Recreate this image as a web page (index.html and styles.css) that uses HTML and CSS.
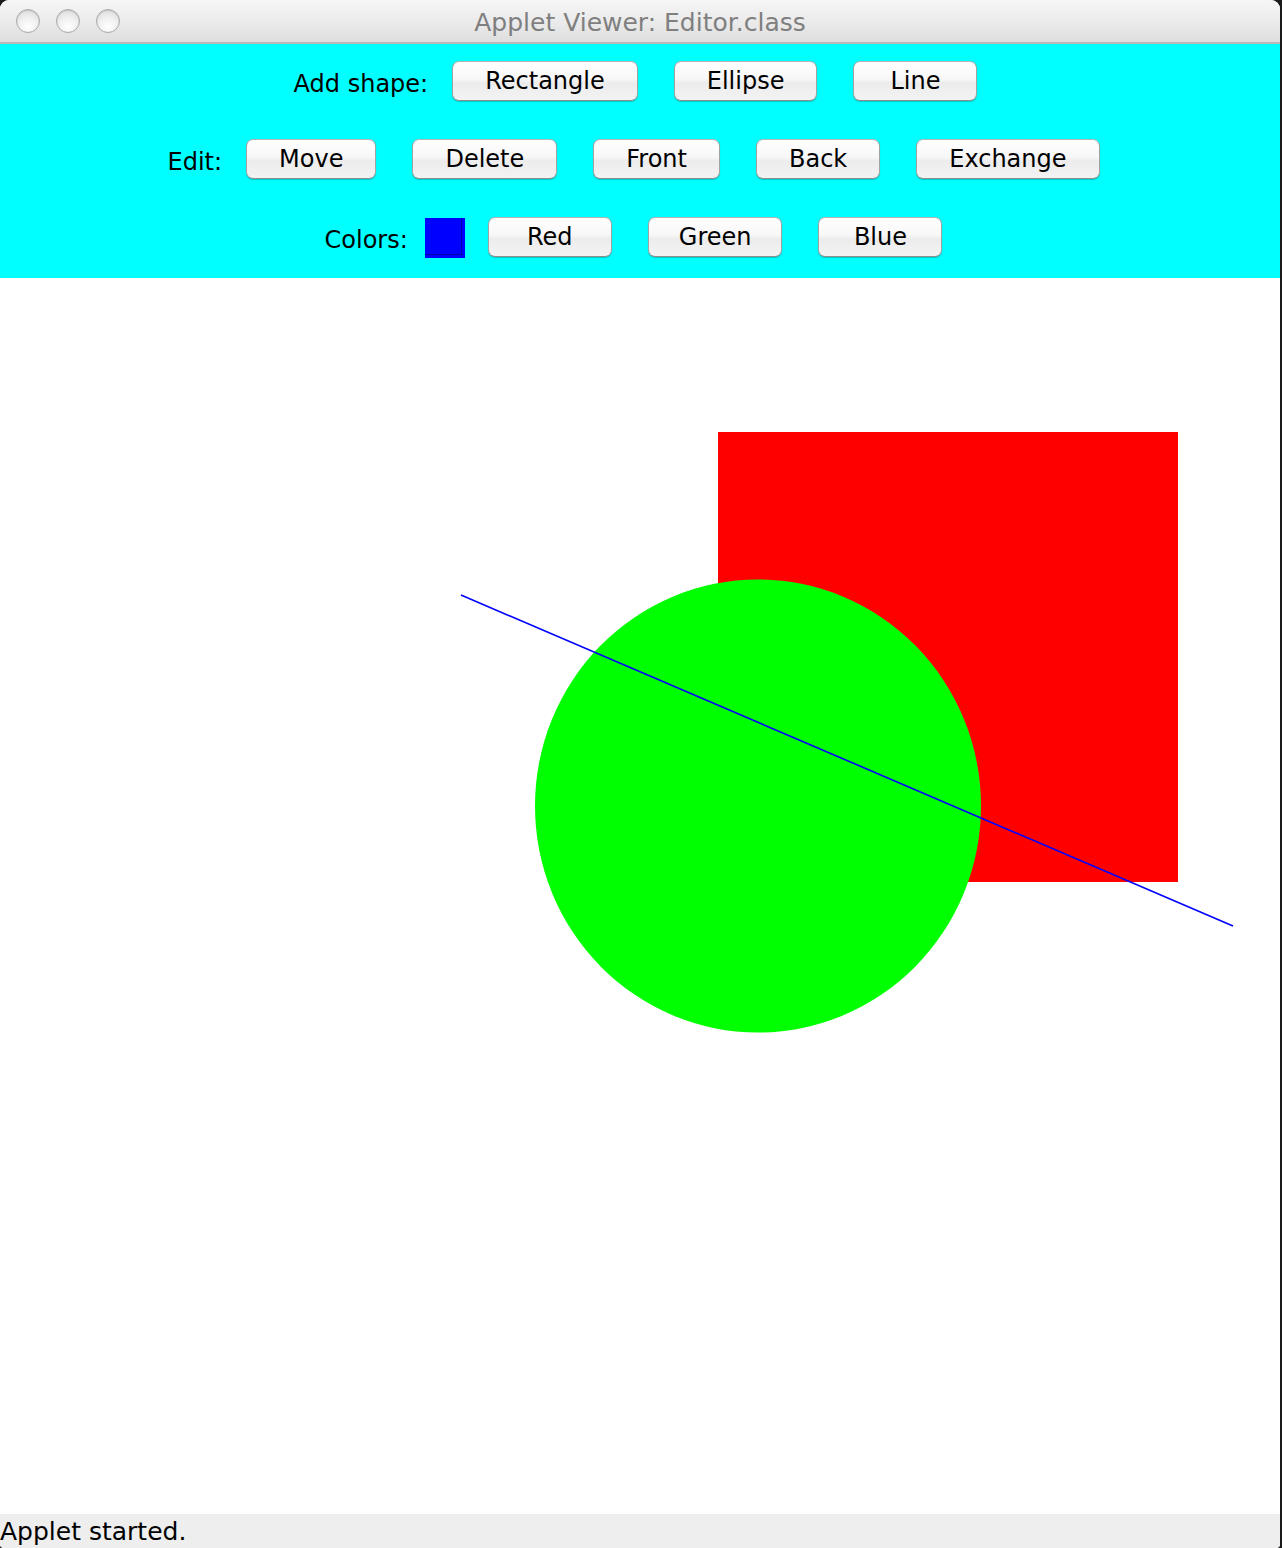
FILE: index.html
```html
<!DOCTYPE html>
<html>
<head>
<meta charset="utf-8">
<title>Applet Viewer: Editor.class</title>
<link rel="stylesheet" href="styles.css">
</head>
<body>
<div class="window">
  <div class="titlebar">
    <div class="lights">
      <span class="light"></span>
      <span class="light"></span>
      <span class="light"></span>
    </div>
    <div class="title">Applet Viewer: Editor.class</div>
  </div>
  <div class="panel">
    <div class="row row-shapes">
      <span class="label">Add shape:</span>
      <button class="btn">Rectangle</button>
      <button class="btn">Ellipse</button>
      <button class="btn">Line</button>
    </div>
    <div class="row">
      <span class="label">Edit:</span>
      <button class="btn">Move</button>
      <button class="btn">Delete</button>
      <button class="btn">Front</button>
      <button class="btn">Back</button>
      <button class="btn">Exchange</button>
    </div>
    <div class="row row-colors">
      <span class="label label-colors">Colors:</span>
      <span class="swatch"></span>
      <button class="btn">Red</button>
      <button class="btn btn-green">Green</button>
      <button class="btn">Blue</button>
    </div>
  </div>
  <div class="canvas">
    <svg class="drawing" width="1280" height="1236" viewBox="0 0 1280 1236">
      <rect x="718" y="154" width="460" height="450" fill="#ff0000"/>
      <ellipse cx="758" cy="528" rx="223" ry="226.5" fill="#00ff00"/>
      <line x1="461" y1="317" x2="1233" y2="648" stroke="#0000ff" stroke-width="1.6"/>
    </svg>
  </div>
  <div class="status">Applet started.</div>
</div>
</body>
</html>
```
FILE: styles.css
```css
html, body {
  margin: 0;
  padding: 0;
  background: #1a1a1a;
}
body {
  width: 1282px;
  height: 1548px;
  overflow: hidden;
  font-family: "DejaVu Sans", "Liberation Sans", sans-serif;
}
.window {
  width: 1280px;
  height: 1548px;
  display: flex;
  flex-direction: column;
  background: #ffffff;
  border-radius: 9px 9px 4px 4px;
  overflow: hidden;
}
.titlebar {
  height: 42px;
  flex: 0 0 42px;
  border-bottom: 2px solid #b9b9b9;
  background: linear-gradient(#f6f6f6, #e9e9e9 60%, #dedede);
  position: relative;
  display: flex;
  align-items: center;
  justify-content: center;
}
.lights {
  position: absolute;
  left: 16px;
  top: 9px;
  display: flex;
  gap: 16px;
}
.light {
  width: 22px;
  height: 22px;
  border-radius: 50%;
  border: 1px solid #a9a9a9;
  background: radial-gradient(circle at 50% 75%, #ffffff 0%, #f2f2f2 40%, #d6d6d6 100%);
  box-shadow: inset 0 1px 1px rgba(0,0,0,0.12);
}
.title {
  font-size: 25px;
  color: #7f7f7f;
  margin-left: 0;
  margin-top: 3px;
}
.panel {
  flex: 0 0 234px;
  height: 234px;
  box-sizing: border-box;
  background: #00ffff;
  padding: 17px 13px 0 0;
  display: flex;
  flex-direction: column;
  gap: 38px;
}
.row {
  height: 40px;
  display: flex;
  align-items: center;
  justify-content: center;
  gap: 36px;
}
.row-shapes {
  padding-left: 4px;
}
.row-colors {
  padding-left: 0;
}
.label {
  font-size: 24px;
  color: #000;
  margin-right: -12px;
  padding-top: 5px;
}
.label-colors {
  margin-right: -19px;
}
.swatch {
  width: 40px;
  height: 40px;
  margin-top: 1px;
  margin-right: -13px;
  background: #0000ff;
  box-shadow: inset -3px -3px 0 #0000ff, inset -4px -4px 0 #0000a8;
}
.btn {
  font-family: "DejaVu Sans", "Liberation Sans", sans-serif;
  font-size: 24px;
  color: #000;
  height: 40px;
  min-width: 124px;
  padding: 0 32px;
  margin: 0;
  box-sizing: border-box;
  border: 1px solid #a2a2a2;
  border-top-color: #b4b4b4;
  border-bottom-color: #8e8e8e;
  border-radius: 7px;
  background: linear-gradient(#ffffff, #f7f7f7 45%, #ececec 55%, #f3f3f3);
  box-shadow: 0 1px 1px rgba(0,0,0,0.22);
  line-height: 38px;
  white-space: nowrap;
}
.btn-green {
  padding: 0 30px;
}
.canvas {
  flex: 0 0 1236px;
  height: 1236px;
  background: #ffffff;
  position: relative;
}
.drawing {
  display: block;
}
.status {
  flex: 0 0 34px;
  height: 34px;
  box-sizing: border-box;
  background: #eeeeee;
  font-size: 25px;
  line-height: 34px;
  color: #000;
  padding-left: 0;
  padding-top: 1px;
  white-space: nowrap;
}
```
